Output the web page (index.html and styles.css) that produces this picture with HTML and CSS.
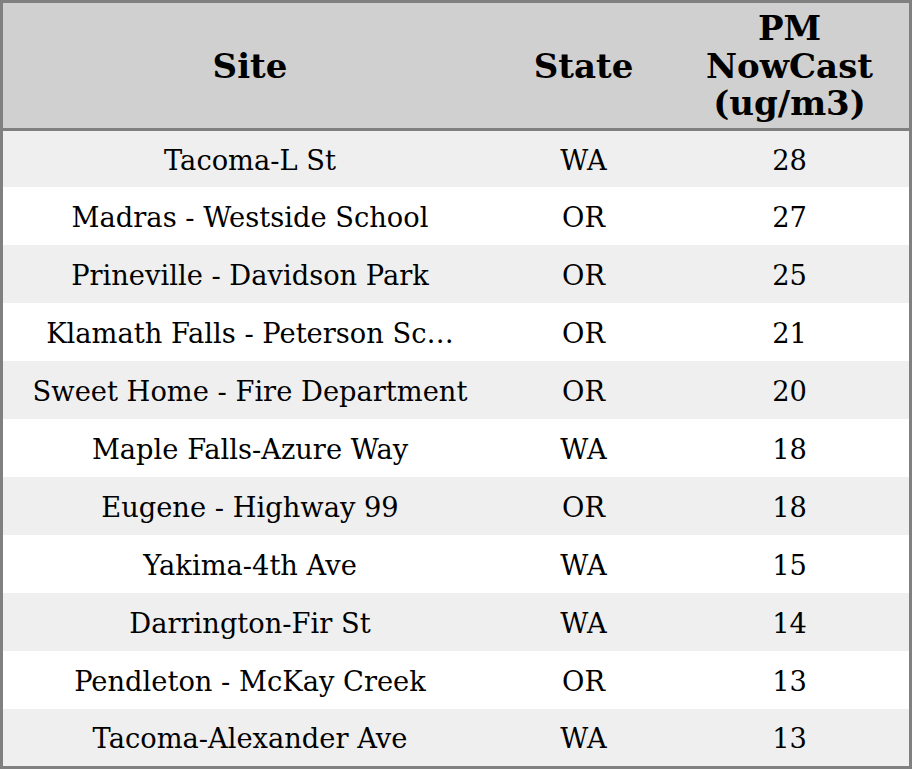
FILE: index.html
```html
<!DOCTYPE html>
<html>
<head>
<meta charset="utf-8">
<link rel="stylesheet" href="styles.css">
</head>
<body>
<table class="tbl">
  <colgroup>
    <col class="c-site">
    <col class="c-state">
    <col class="c-pm">
  </colgroup>
  <thead>
    <tr class="head">
      <th>Site</th>
      <th>State</th>
      <th>PM<br>NowCast<br>(ug/m3)</th>
    </tr>
  </thead>
  <tbody>
    <tr class="alt first"><td>Tacoma-L St</td><td>WA</td><td>28</td></tr>
    <tr><td>Madras - Westside School</td><td>OR</td><td>27</td></tr>
    <tr class="alt"><td>Prineville - Davidson Park</td><td>OR</td><td>25</td></tr>
    <tr><td>Klamath Falls - Peterson Sc…</td><td>OR</td><td>21</td></tr>
    <tr class="alt"><td>Sweet Home - Fire Department</td><td>OR</td><td>20</td></tr>
    <tr><td>Maple Falls-Azure Way</td><td>WA</td><td>18</td></tr>
    <tr class="alt"><td>Eugene - Highway 99</td><td>OR</td><td>18</td></tr>
    <tr><td>Yakima-4th Ave</td><td>WA</td><td>15</td></tr>
    <tr class="alt"><td>Darrington-Fir St</td><td>WA</td><td>14</td></tr>
    <tr><td>Pendleton - McKay Creek</td><td>OR</td><td>13</td></tr>
    <tr class="alt last"><td>Tacoma-Alexander Ave</td><td>WA</td><td>13</td></tr>
  </tbody>
</table>
</body>
</html>
```

FILE: styles.css
```css
html, body {
  margin: 0;
  padding: 0;
  background: #ffffff;
}
.tbl {
  width: 912px;
  border: 3px solid #808080;
  border-collapse: separate;
  border-spacing: 0;
  table-layout: fixed;
  font-family: "DejaVu Serif", serif;
  color: #000;
}
.c-site { width: 494px; }
.c-state { width: 173px; }
.c-pm { width: 239px; }
.head {
  background: #d0d0d0;
  height: 128px;
}
.head th {
  font-size: 34px;
  font-weight: bold;
  line-height: 37.5px;
  text-align: center;
  vertical-align: middle;
  padding: 2px 0 0;
  border-bottom: 3px solid #808080;
}
tbody tr {
  height: 58px;
}
tbody tr.first { height: 56px; }
tbody tr.last { height: 57px; }
tbody tr.alt { background: #efefef; }
tbody td {
  font-size: 27.3px;
  line-height: 31px;
  text-align: center;
  vertical-align: middle;
  padding: 2px 0 0;
  white-space: nowrap;
  overflow: hidden;
}
```
